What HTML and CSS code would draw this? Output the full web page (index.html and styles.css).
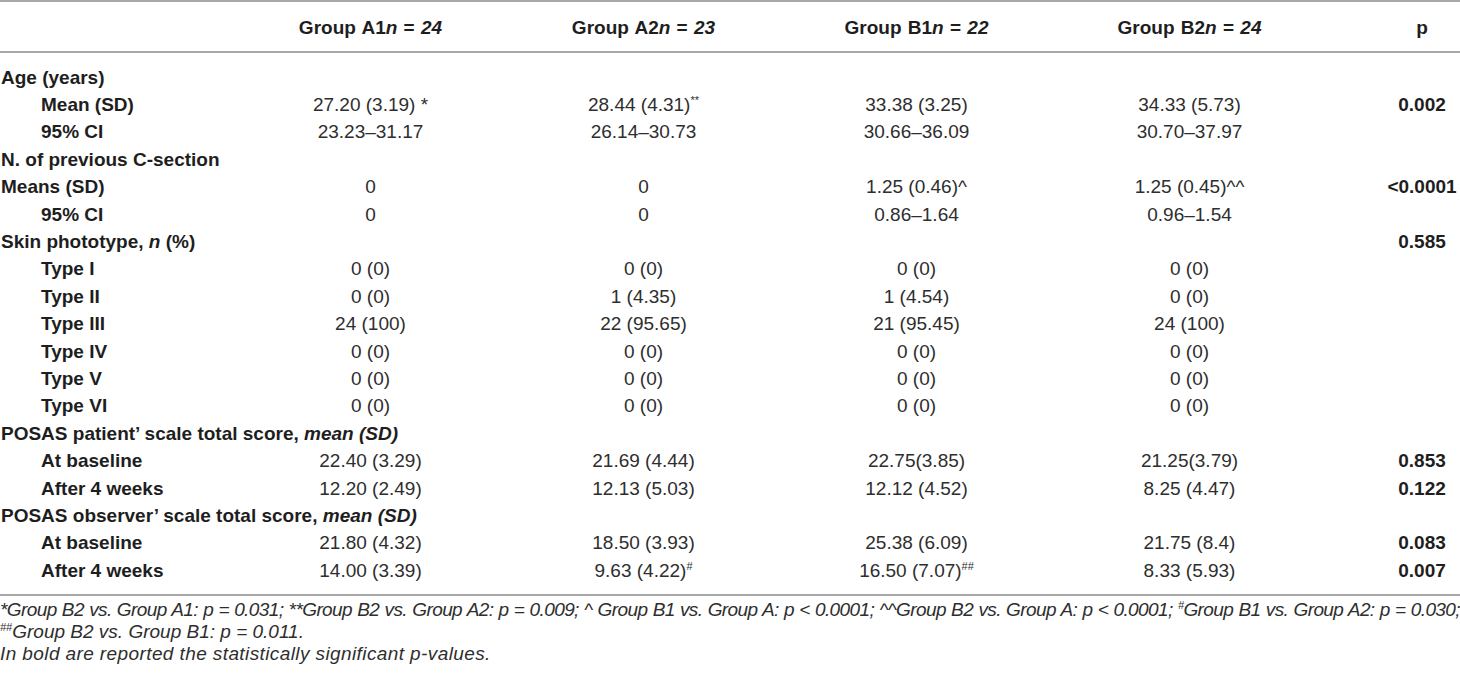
FILE: index.html
```html
<!DOCTYPE html>
<html lang="en">

<head>
    <meta charset="UTF-8">
    <title>Baseline characteristics</title>
    <link rel="stylesheet" href="styles.css">
</head>

<body>
    <table class="stats">
        <colgroup>
            <col class="c-label">
            <col class="c-group">
            <col class="c-group">
            <col class="c-group">
            <col class="c-group">
            <col class="c-p">
        </colgroup>
        <thead>
            <tr>
                <th></th>
                <th>Group A1<i>n</i> = <i>24</i></th>
                <th>Group A2<i>n</i> = <i>23</i></th>
                <th>Group B1<i>n</i> = <i>22</i></th>
                <th>Group B2<i>n</i> = <i>24</i></th>
                <th class="p">p</th>
            </tr>
        </thead>
        <tbody>
            <tr class="first">
                <td class="label">Age (years)</td>
                <td></td><td></td><td></td><td></td><td class="p"></td>
            </tr>
            <tr>
                <td class="label sub">Mean (SD)</td>
                <td>27.20 (3.19) *</td>
                <td>28.44 (4.31)<sup>**</sup></td>
                <td>33.38 (3.25)</td>
                <td>34.33 (5.73)</td>
                <td class="p">0.002</td>
            </tr>
            <tr>
                <td class="label sub">95% CI</td>
                <td>23.23–31.17</td>
                <td>26.14–30.73</td>
                <td>30.66–36.09</td>
                <td>30.70–37.97</td>
                <td class="p"></td>
            </tr>
            <tr>
                <td class="label">N. of previous C-section</td>
                <td></td><td></td><td></td><td></td><td class="p"></td>
            </tr>
            <tr>
                <td class="label">Means (SD)</td>
                <td>0</td>
                <td>0</td>
                <td>1.25 (0.46)^</td>
                <td>1.25 (0.45)^^</td>
                <td class="p">&lt;0.0001</td>
            </tr>
            <tr>
                <td class="label sub">95% CI</td>
                <td>0</td>
                <td>0</td>
                <td>0.86–1.64</td>
                <td>0.96–1.54</td>
                <td class="p"></td>
            </tr>
            <tr>
                <td class="label">Skin phototype, <i>n</i> (%)</td>
                <td></td><td></td><td></td><td></td>
                <td class="p">0.585</td>
            </tr>
            <tr>
                <td class="label sub">Type I</td>
                <td>0 (0)</td><td>0 (0)</td><td>0 (0)</td><td>0 (0)</td><td class="p"></td>
            </tr>
            <tr>
                <td class="label sub">Type II</td>
                <td>0 (0)</td><td>1 (4.35)</td><td>1 (4.54)</td><td>0 (0)</td><td class="p"></td>
            </tr>
            <tr>
                <td class="label sub">Type III</td>
                <td>24 (100)</td><td>22 (95.65)</td><td>21 (95.45)</td><td>24 (100)</td><td class="p"></td>
            </tr>
            <tr>
                <td class="label sub">Type IV</td>
                <td>0 (0)</td><td>0 (0)</td><td>0 (0)</td><td>0 (0)</td><td class="p"></td>
            </tr>
            <tr>
                <td class="label sub">Type V</td>
                <td>0 (0)</td><td>0 (0)</td><td>0 (0)</td><td>0 (0)</td><td class="p"></td>
            </tr>
            <tr>
                <td class="label sub">Type VI</td>
                <td>0 (0)</td><td>0 (0)</td><td>0 (0)</td><td>0 (0)</td><td class="p"></td>
            </tr>
            <tr>
                <td class="label" colspan="3">POSAS patient’ scale total score, <i>mean (SD)</i></td>
                <td></td><td></td><td class="p"></td>
            </tr>
            <tr>
                <td class="label sub">At baseline</td>
                <td>22.40 (3.29)</td>
                <td>21.69 (4.44)</td>
                <td>22.75(3.85)</td>
                <td>21.25(3.79)</td>
                <td class="p">0.853</td>
            </tr>
            <tr>
                <td class="label sub">After 4 weeks</td>
                <td>12.20 (2.49)</td>
                <td>12.13 (5.03)</td>
                <td>12.12 (4.52)</td>
                <td>8.25 (4.47)</td>
                <td class="p">0.122</td>
            </tr>
            <tr>
                <td class="label" colspan="3">POSAS observer’ scale total score, <i>mean (SD)</i></td>
                <td></td><td></td><td class="p"></td>
            </tr>
            <tr>
                <td class="label sub">At baseline</td>
                <td>21.80 (4.32)</td>
                <td>18.50 (3.93)</td>
                <td>25.38 (6.09)</td>
                <td>21.75 (8.4)</td>
                <td class="p">0.083</td>
            </tr>
            <tr class="last">
                <td class="label sub">After 4 weeks</td>
                <td>14.00 (3.39)</td>
                <td>9.63 (4.22)<sup>#</sup></td>
                <td>16.50 (7.07)<sup>##</sup></td>
                <td>8.33 (5.93)</td>
                <td class="p">0.007</td>
            </tr>
        </tbody>
    </table>

    <div class="notes">
        <p class="full">*Group B2 vs. Group A1: p = 0.031; **Group B2 vs. Group A2: p = 0.009; ^ Group B1 vs. Group A: p &lt; 0.0001; ^^Group B2 vs. Group A: p &lt; 0.0001; <sup>#</sup>Group B1 vs. Group A2: p = 0.030;</p>
        <p><sup>##</sup>Group B2 vs. Group B1: p = 0.011.</p>
        <p class="loose">In bold are reported the statistically significant p-values.</p>
    </div>
</body>

</html>
```

FILE: styles.css
```css
body {
    margin: 0;
    font-family: "Liberation Sans", Arial, sans-serif;
    color: #2e2e2e;
    background: #fff;
    width: 1460px;
}

.stats {
    width: 1460px;
    table-layout: fixed;
    border-collapse: collapse;
    font-size: 19px;
}

.c-label {
    width: 234px;
}

.c-group {
    width: 273px;
}

.c-p {
    width: 134px;
}

.stats thead tr {
    border-top: 2px solid #a8a8a8;
    border-bottom: 2px solid #a8a8a8;
}

.stats th {
    height: 47px;
    padding: 0;
    padding-top: 2px;
    font-weight: bold;
    color: #1e1e1e;
    text-align: center;
    word-spacing: 1px;
}

.stats td {
    height: 27.4px;
    padding: 0;
    text-align: center;
    white-space: nowrap;
}

.stats tbody tr.first td {
    padding-top: 11px;
}

.stats tbody tr.last td {
    padding-bottom: 10px;
}

.stats tbody tr.last {
    border-bottom: 2px solid #a8a8a8;
}

.stats .label {
    text-align: left;
    font-weight: bold;
    color: #1e1e1e;
    padding-left: 1px;
}

.stats .label.sub {
    padding-left: 41px;
}

.stats .p {
    padding-left: 58px;
    font-weight: bold;
    color: #1e1e1e;
}

.stats sup {
    font-size: 11px;
    line-height: 0;
}

.notes {
    padding-top: 3px;
    font-size: 19px;
    font-style: italic;
    color: #2e2e2e;
    line-height: 22px;
}

.notes p {
    margin: 0;
    white-space: nowrap;
}

.notes .full {
    letter-spacing: -0.6px;
    word-spacing: -0.8px;
    text-align: justify;
    text-align-last: justify;
    white-space: normal;
}

.notes .loose {
    letter-spacing: 0.4px;
}

.notes sup {
    font-size: 11px;
    line-height: 0;
}
```
